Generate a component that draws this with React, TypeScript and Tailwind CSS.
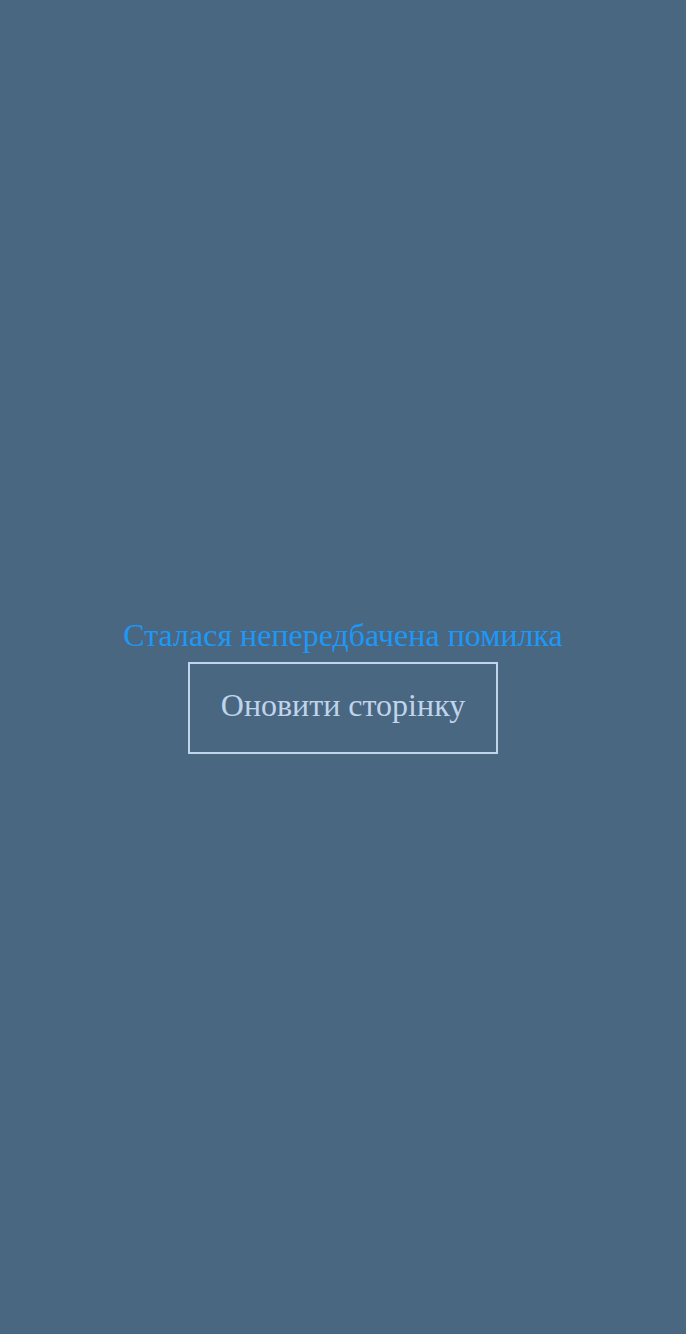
export default function App() {
  return (
    <div className="min-h-screen bg-[#4a6782] pt-[36px] flex flex-col items-center justify-center font-['Liberation_Serif',serif]">
      <p className="text-[32px] leading-[37px] text-[#1c98f7]">Сталася непередбачена помилка</p>
      <button className="mt-[8px] border-2 border-[#c0d4ec] px-[31px] pb-[6px] h-[92px] text-[32px] text-[#c0d4ec]">
        Оновити сторінку
      </button>
    </div>
  );
}
